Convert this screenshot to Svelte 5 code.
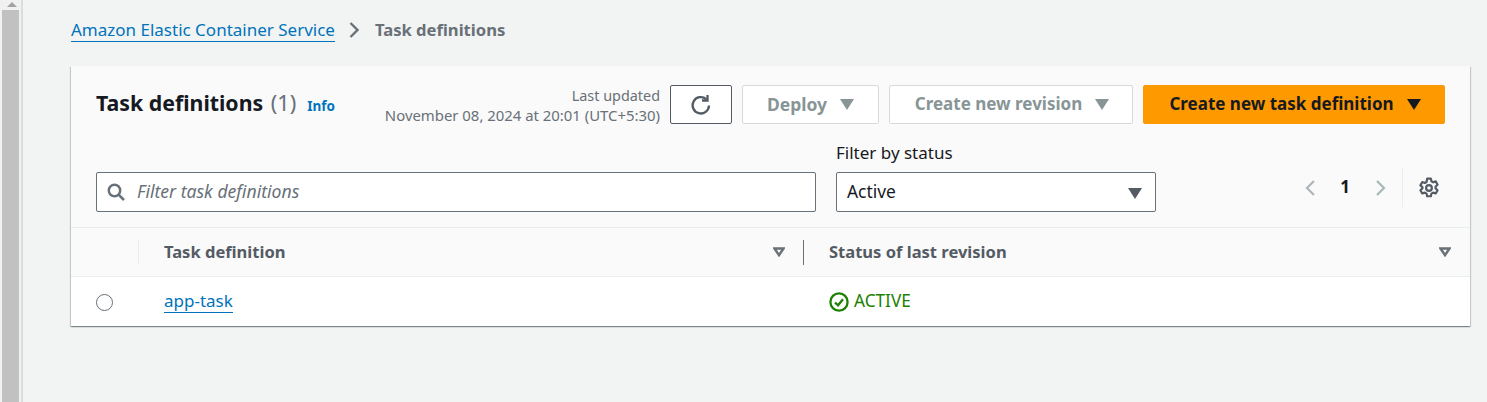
<script lang="ts">
  // Task definitions list from the ECS console.
  const columns = [
    { label: "Task definition", cls: "col-name" },
    { label: "Status of last revision", cls: "col-status" },
  ];
</script>

<div class="shell">
  <div class="scrollbar" aria-hidden="true">
    <div class="scroll-arrow"></div>
    <div class="scroll-thumb"></div>
  </div>

  <main class="page">
    <nav class="crumbs">
      <a href="#top" class="crumb-link">Amazon Elastic Container Service</a>
      <svg class="crumb-sep" width="16" height="16" viewBox="0 0 16 16"><path d="M4.5 1l7 7-7 7" fill="none" stroke="#687078" stroke-width="2.4"/></svg>
      <span class="crumb-current">Task definitions</span>
    </nav>

    <section class="card">
      <header class="card-head">
        <div class="title-wrap">
          <h1>Task definitions <span class="count">(1)</span></h1>
          <a href="#top" class="info">Info</a>
        </div>
        <div class="actions">
          <div class="updated">
            <div class="updated-label">Last updated</div>
            <div>November 08, 2024 at 20:01 (UTC+5:30)</div>
          </div>
          <button class="btn refresh" aria-label="Refresh">
            <svg width="22" height="22" viewBox="0 0 22 22" fill="none" stroke="#545b64" stroke-width="2.3"><path d="M19 11.5a8.2 8.2 0 1 1-2.8-6.4"/><path d="M17.5 1v5.5H12"/></svg>
          </button>
          <button class="btn disabled deploy">Deploy <span class="caret"></span></button>
          <button class="btn disabled revision">Create new revision <span class="caret"></span></button>
          <button class="btn primary">Create new task definition <span class="caret"></span></button>
        </div>
      </header>

      <div class="filters">
        <div class="search">
          <svg width="18" height="18" viewBox="0 0 18 18" fill="none" stroke="#687078" stroke-width="2.5"><circle cx="7.5" cy="7.5" r="5.7"/><path d="M11.8 11.8L17 17"/></svg>
          <span>Filter task definitions</span>
        </div>
        <div class="status-filter">
          <span class="filter-label">Filter by status</span>
          <div class="select"><span class="select-value">Active</span> <span class="caret dark"></span></div>
        </div>
        <div class="pager">
          <svg width="12" height="18" viewBox="0 0 12 18" fill="none" stroke="#aab7b8" stroke-width="2.2"><path d="M10 2L3 9l7 7"/></svg>
          <span class="page-num">1</span>
          <svg width="12" height="18" viewBox="0 0 12 18" fill="none" stroke="#aab7b8" stroke-width="2.2"><path d="M2 2l7 7-7 7"/></svg>
          <span class="pager-sep"></span>
          <svg class="gear" width="22" height="22" viewBox="0 0 20 20" fill="none" stroke="#545b64" stroke-width="2" stroke-linejoin="round"><circle cx="10" cy="10" r="2.6"/><path d="M8.3 1.5h3.4l.5 2.4 1.6.9 2.3-.8 1.7 3-1.8 1.6v1.8l1.8 1.6-1.7 3-2.3-.8-1.6.9-.5 2.4H8.3l-.5-2.4-1.6-.9-2.3.8-1.7-3 1.8-1.6V9.2L2.2 7.6l1.7-3 2.3.8 1.6-.9z"/></svg>
        </div>
      </div>

      <div class="thead">
        <div class="cell-radio"><span class="head-tick"></span></div>
        {#each columns as col, i}
          <div class="th {col.cls}">
            <span class="th-label">{col.label}</span>
            <svg width="12" height="10" viewBox="0 0 12 10" fill="none" stroke="#687078" stroke-width="2.4"><path d="M1.5 1.5h9L6 8.2z"/></svg>
            {#if i === 0}<span class="col-divider"></span>{/if}
          </div>
        {/each}
      </div>

      <div class="row">
        <div class="cell-radio"><span class="radio"></span></div>
        <div class="col-name td"><a href="#top" class="row-link">app-task</a></div>
        <div class="col-status td status">
          <svg class="status-icon" width="20" height="20" viewBox="0 0 20 20" fill="none" stroke="#1d8102" stroke-width="2.3"><circle cx="10" cy="10" r="8.6"/><path d="M6 10.5l3 2.8 5-6" /></svg>
          <span class="status-text">ACTIVE</span>
        </div>
      </div>
    </section>
  </main>
</div>

<style>
  :global(body) {
    margin: 0;
    background: #f2f3f3;
  }
  .shell {
    display: flex;
    height: 402px;
    overflow: hidden;
    font-family: "Noto Sans", "Open Sans", sans-serif;
    font-size: 17px;
    color: #16191f;
  }
  .scrollbar {
    flex: none;
    background: #f1f1f1;
    border-right: 2px solid #dcdcdc;
    padding-left: 2px;
    width: 19px;
    display: flex;
    flex-direction: column;
  }
  .scroll-arrow {
    width: 0;
    height: 0;
    margin: 2px 0 3px 5px;
    border: 5px solid transparent;
    border-top: 0;
    border-bottom: 5px solid #a3a3a3;
    flex: none;
  }
  .scroll-thumb {
    width: 17px;
    flex: 1;
    background: #c1c1c1;
  }
  .page {
    flex: 1;
    padding: 18px 17px 0 48px;
    min-width: 0;
  }
  .crumbs {
    display: flex;
    align-items: center;
    height: 24px;
    margin-bottom: 24px;
    line-height: 22px;
  }
  .crumb-link {
    color: #0073bb;
    text-decoration: none;
    border-bottom: 1px solid #0073bb;
    line-height: 22px;
  }
  .crumb-sep {
    margin: 0 13px 0 11px;
  }
  .crumb-current {
    color: #687078;
    font-weight: 700;
    font-size: 16.6px;
  }
  .card {
    width: 1399px;
    background: #fafafa;
    box-shadow: 0 1px 1px 0 rgba(0, 28, 36, 0.3), 1px 1px 1px 0 rgba(0, 28, 36, 0.15), -1px 1px 1px 0 rgba(0, 28, 36, 0.15);
  }
  .card-head {
    display: flex;
    justify-content: space-between;
    height: 77px;
    padding: 19px 25px 0 25px;
    box-sizing: border-box;
  }
  .title-wrap {
    display: flex;
    align-items: baseline;
    gap: 11px;
    padding-top: 2px;
  }
  h1 {
    margin: 0;
    font-size: 21.3px;
    line-height: 32px;
    font-weight: 700;
  }
  .count {
    font-weight: 400;
    color: #687078;
    margin-left: 2px;
    font-size: 21.8px;
  }
  .info {
    color: #0073bb;
    font-size: 13.5px;
    font-weight: 700;
    text-decoration: none;
  }
  .actions {
    display: flex;
    gap: 10px;
    align-items: flex-start;
  }
  .updated {
    text-align: right;
    font-size: 14.9px;
    line-height: 20px;
    color: #687078;
  }
  .updated-label {
    font-size: 14.4px;
    position: relative;
    top: 1px;
  }
  .btn {
    font: inherit;
    font-weight: 700;
    height: 39px;
    box-sizing: border-box;
    border-radius: 2px;
    display: flex;
    align-items: center;
    justify-content: center;
    gap: 13px;
    padding: 0 0 2px 2px;
    background: #fff;
    border: 1px solid #545b64;
  }
  .refresh { width: 62px; padding: 0; }
  .disabled {
    border-color: #d5dbdb;
    color: #879596;
  }
  .deploy { width: 137px; font-size: 17.5px; padding-left: 0; }
  .revision { width: 244px; }
  .primary {
    width: 302px;
    background: #ff9900;
    border-color: #ff9900;
    color: #16191f;
  }
  .caret {
    display: inline-block;
    width: 0;
    height: 0;
    margin-top: 2px;
    border-left: 7px solid transparent;
    border-right: 7px solid transparent;
    border-top: 11px solid currentColor;
  }
  .select .caret.dark {
    color: #545b64;
  }
  .filters {
    display: flex;
    height: 85px;
    padding: 0 25px;
    box-sizing: border-box;
    border-bottom: 1px solid #eaeded;
  }
  .search {
    width: 720px;
    height: 40px;
    margin-top: 29px;
    box-sizing: border-box;
    background: #fff;
    border: 1px solid #687078;
    border-radius: 2px;
    display: flex;
    align-items: center;
    gap: 12px;
    padding-left: 10px;
    color: #687078;
    font-style: italic;
    font-size: 17.6px;
  }
  .search span {
    position: relative;
    top: -1px;
  }
  .status-filter {
    margin-left: 20px;
    width: 320px;
    display: flex;
    flex-direction: column;
  }
  .filter-label {
    line-height: 22px;
    margin-top: -1px;
    margin-bottom: 8px;
  }
  .select {
    height: 40px;
    box-sizing: border-box;
    background: #fff;
    border: 1px solid #687078;
    border-radius: 2px;
    display: flex;
    align-items: center;
    justify-content: space-between;
    padding: 0 13px 0 10px;
    font-size: 17.4px;
  }
  .select-value {
    position: relative;
    top: -1px;
  }
  .pager {
    margin-left: auto;
    display: flex;
    align-items: center;
    height: 39px;
    margin-top: 25px;
    margin-right: 5px;
  }
  .page-num {
    font-weight: 700;
    margin: 0 25px 0 24px;
    line-height: 39px;
    position: relative;
    top: -1px;
  }
  .pager-sep {
    width: 1px;
    height: 39px;
    background: #eaeded;
    margin: 0 15px;
  }
  .thead, .row {
    display: flex;
    align-items: center;
  }
  .thead {
    height: 48px;
    border-bottom: 1px solid #eaeded;
    font-weight: 700;
    font-size: 16.55px;
    color: #545b64;
  }
  .th-label {
    position: relative;
    top: -1px;
  }
  .row {
    height: 49px;
    background: #fff;
  }
  .cell-radio {
    width: 67px;
    flex: none;
    height: 100%;
    display: flex;
    align-items: center;
    position: relative;
  }
  .head-tick {
    position: absolute;
    left: 67px;
    top: 12px;
    width: 1px;
    height: 25px;
    background: #eaeded;
  }
  .radio {
    width: 15px;
    height: 15px;
    margin-left: 25px;
    margin-top: 1px;
    background: #fff;
    border: 1.5px solid #687078;
    border-radius: 50%;
  }
  .col-name {
    width: 666px;
    padding-left: 26px;
    box-sizing: border-box;
    flex: none;
  }
  .col-status {
    flex: 1;
    padding-left: 25px;
    box-sizing: border-box;
  }
  .th {
    display: flex;
    align-items: center;
    justify-content: space-between;
    position: relative;
    height: 100%;
    padding-right: 19px;
  }
  .col-divider {
    position: absolute;
    right: 0;
    top: 12px;
    width: 1px;
    height: 25px;
    background: #687078;
  }
  .td {
    position: relative;
    top: -1px;
  }
  .row-link {
    color: #0073bb;
    text-decoration: none;
    border-bottom: 1px solid #0073bb;
    line-height: 22px;
    display: inline-block;
  }
  .status {
    display: flex;
    align-items: center;
    gap: 5px;
    color: #1d8102;
  }
  .status-icon {
    margin-top: 2px;
  }
  .status-text {
    font-size: 17.2px;
  }
</style>
